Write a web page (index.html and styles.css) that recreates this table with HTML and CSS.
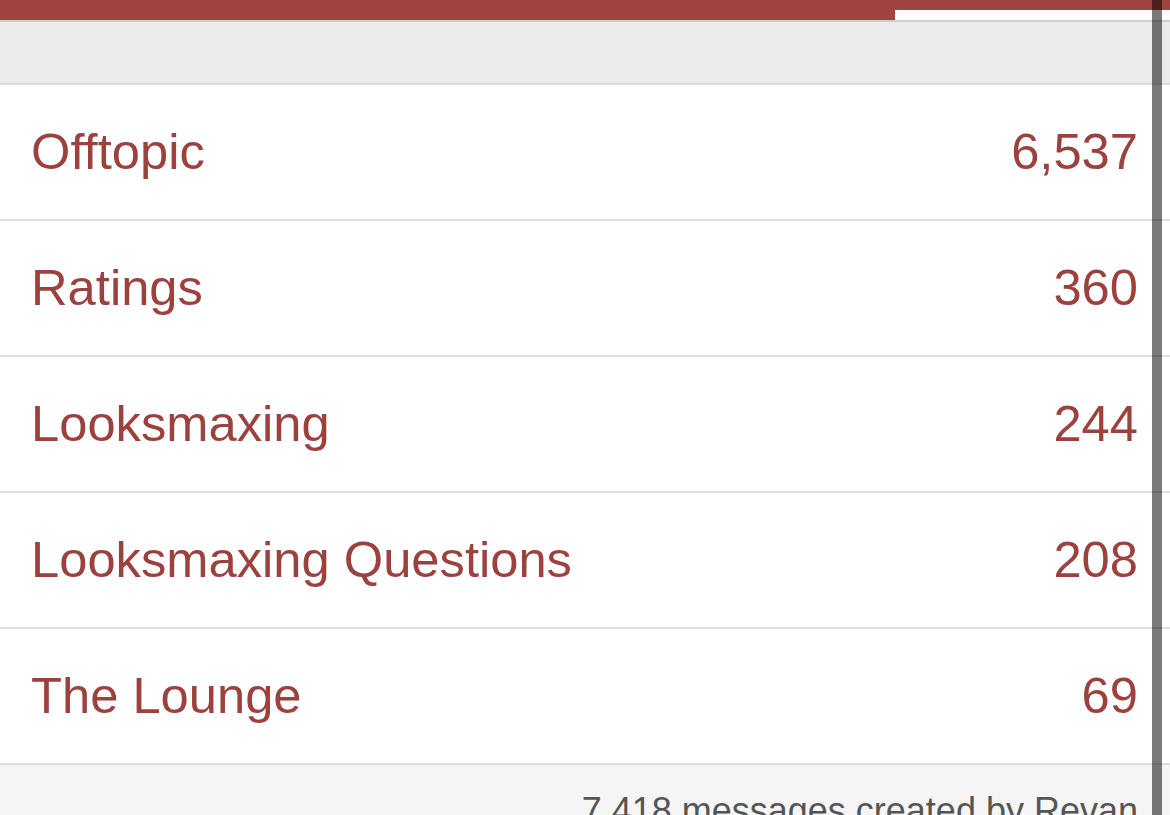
FILE: index.html
```html
<!DOCTYPE html>
<html>
<head>
<meta charset="utf-8">
<link rel="stylesheet" href="styles.css">
</head>
<body>
<div class="page">
  <div class="topbar">
    <div class="topbar-fill"></div>
    <div class="topbar-tab"></div>
  </div>
  <div class="subhead"></div>
  <ul class="list">
    <li class="row"><span class="name">Offtopic</span><span class="count">6,537</span></li>
    <li class="row"><span class="name">Ratings</span><span class="count">360</span></li>
    <li class="row"><span class="name">Looksmaxing</span><span class="count">244</span></li>
    <li class="row"><span class="name">Looksmaxing Questions</span><span class="count">208</span></li>
    <li class="row"><span class="name">The Lounge</span><span class="count">69</span></li>
  </ul>
  <div class="footer">7,418 messages created by Revan</div>
  <div class="scrollbar"></div>
</div>
</body>
</html>
```
FILE: styles.css
```css
html, body {
  margin: 0;
  padding: 0;
  background: #ffffff;
}
body {
  font-family: "Liberation Sans", Arial, sans-serif;
  overflow: hidden;
}
.page {
  position: relative;
  width: 1170px;
  height: 815px;
  overflow: hidden;
}
.topbar {
  display: flex;
  height: 20px;
  background: #9f4440;
}
.topbar-fill {
  width: 895px;
}
.topbar-tab {
  flex: 1;
  margin-top: 10px;
  background: #ffffff;
}
.subhead {
  height: 61px;
  background: #ebebeb;
  border-top: 2px solid #cdcdcd;
  border-bottom: 2px solid #dddddd;
}
.list {
  list-style: none;
  margin: 0;
  padding: 0;
}
.row {
  display: flex;
  align-items: center;
  justify-content: space-between;
  height: 132px;
  padding: 0 32px 2px 31px;
  border-bottom: 2px solid #dedede;
  color: #9c423e;
  font-size: 50.7px;
}
.footer {
  background: #f5f5f5;
  color: #555555;
  font-size: 36px;
  text-align: right;
  padding: 25px 32px 20px 0;
}
.scrollbar {
  position: absolute;
  top: 0;
  left: 1152px;
  width: 10px;
  height: 815px;
  background: rgba(0, 0, 0, 0.52);
}
```
